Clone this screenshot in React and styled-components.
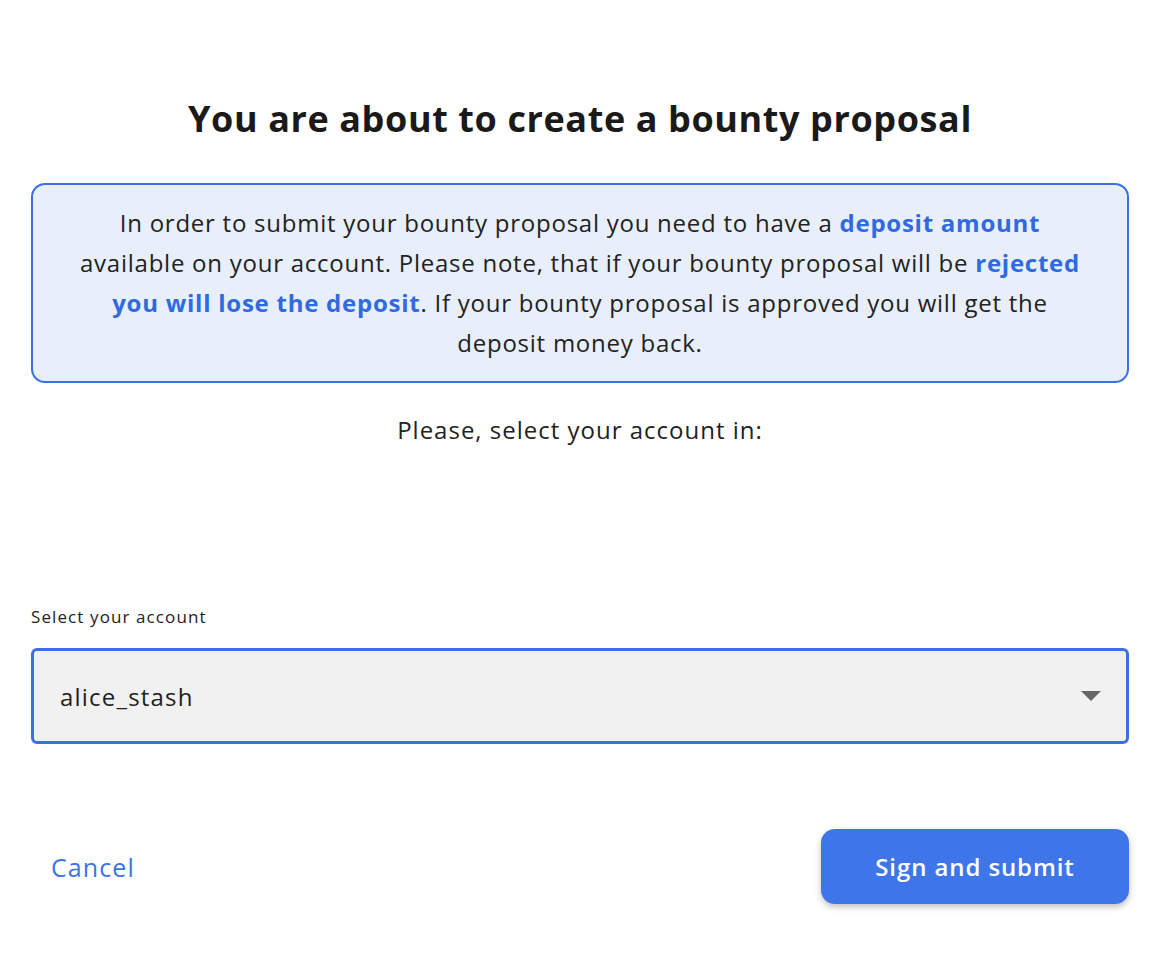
import React, { useState } from 'react'
import styled, { createGlobalStyle } from 'styled-components'

const GlobalStyle = createGlobalStyle`
  html, body {
    margin: 0;
    padding: 0;
    background: #fff;
  }
  body {
    font-family: "Open Sans", Lato, Arial, sans-serif;
    color: #1c1c1c;
  }
  * {
    box-sizing: border-box;
  }
`

const accounts = ['alice_stash', 'alice', 'bob', 'bob_stash']

const App = () => {
  const [account, setAccount] = useState('alice_stash')

  return (
    <>
      <GlobalStyle />
      <Modal>
        <Title>You are about to create a bounty proposal</Title>

        <InfoBox>
          In order to submit your bounty proposal you need to have a <Strong>deposit amount</Strong>
          <br />
          available on your account. Please note, that if your bounty proposal will be{' '}
          <Strong>rejected</Strong>
          <br />
          <Strong>you will lose the deposit</Strong>. If your bounty proposal is approved you will get the
          <br />
          deposit money back.
        </InfoBox>

        <Hint>Please, select your account in:</Hint>

        <Field>
          <Label>Select your account</Label>
          <SelectWrap>
            <Select value={account} onChange={(e) => setAccount(e.target.value)}>
              {accounts.map((a) => (
                <option key={a} value={a}>
                  {a}
                </option>
              ))}
            </Select>
            <Arrow viewBox="0 0 20 10">
              <path d="M0 0 H20 L10 10 Z" fill="#666" />
            </Arrow>
          </SelectWrap>
        </Field>

        <Footer>
          <CancelButton>Cancel</CancelButton>
          <SubmitButton>Sign and submit</SubmitButton>
        </Footer>
      </Modal>
    </>
  )
}

const Modal = styled.div`
  width: 1162px;
  min-height: 970px;
  padding: 96px 33px 0 31px;
  display: flex;
  flex-direction: column;
`

const Title = styled.h1`
  margin: 0;
  text-align: center;
  font-size: 36px;
  font-weight: 700;
  line-height: 46px;
  letter-spacing: 0.6px;
  color: #1a1a1a;
`

const InfoBox = styled.div`
  margin-top: 41px;
  height: 200px;
  padding: 18px 10px;
  background: #e8effa;
  border: 2px solid #3a6fe6;
  border-radius: 14px;
  text-align: center;
  font-size: 24px;
  line-height: 40px;
  letter-spacing: 0.75px;
  color: #222;
  white-space: nowrap;
`

const Strong = styled.span`
  font-weight: 700;
  color: #2f6ae3;
`

const Hint = styled.p`
  margin: 30px 0 0;
  text-align: center;
  font-size: 24px;
  line-height: 34px;
  letter-spacing: 1px;
  color: #222;
`

const Field = styled.div`
  margin-top: 159px;
  display: flex;
  flex-direction: column;
  gap: 20px;
`

const Label = styled.label`
  font-size: 17px;
  line-height: 22px;
  letter-spacing: 1.1px;
  color: #222;
`

const SelectWrap = styled.div`
  position: relative;
`

const Select = styled.select`
  width: 100%;
  height: 96px;
  appearance: none;
  padding: 0 26px;
  background: #f1f1f1;
  border: 3px solid #3a6fe6;
  border-radius: 6px;
  font-family: inherit;
  font-size: 24px;
  letter-spacing: 1.2px;
  color: #1f1f1f;
  outline: none;
`

const Arrow = styled.svg`
  position: absolute;
  right: 28px;
  top: 43px;
  width: 20px;
  height: 10px;
  pointer-events: none;
`

const Footer = styled.div`
  margin-top: 85px;
  display: flex;
  align-items: center;
  justify-content: space-between;
`

const CancelButton = styled.button`
  margin-left: 20px;
  padding: 0;
  background: none;
  border: none;
  font-family: inherit;
  font-size: 25px;
  font-weight: 500;
  letter-spacing: 1.1px;
  color: #3b74e6;
  cursor: pointer;
`

const SubmitButton = styled.button`
  width: 308px;
  height: 75px;
  background: #3e76e9;
  border: none;
  border-radius: 14px;
  box-shadow: 0 3px 6px rgba(0, 0, 0, 0.25);
  font-family: inherit;
  font-size: 24px;
  font-weight: 600;
  letter-spacing: 0.9px;
  color: #fff;
  cursor: pointer;
`

export default App
